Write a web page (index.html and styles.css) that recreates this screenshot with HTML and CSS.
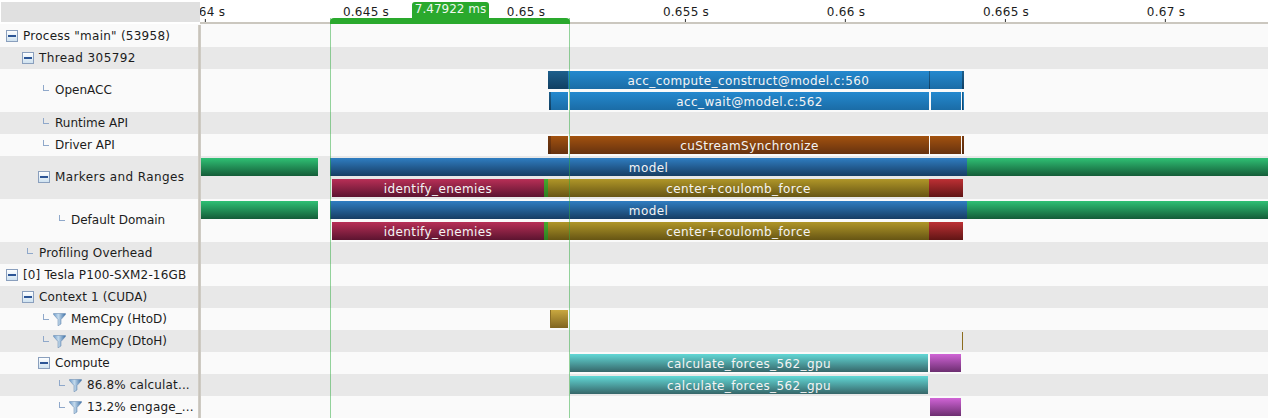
FILE: index.html
```html
<!DOCTYPE html>
<html lang="en">
<head>
<meta charset="utf-8">
<title>Timeline</title>
<link rel="stylesheet" href="styles.css">
</head>
<body>
<svg class="defs" width="0" height="0" aria-hidden="true">
  <defs>
    <linearGradient id="funnel-fill" x1="0" x2="1" y1="0" y2="0">
      <stop offset="0" stop-color="#6b9aca"/>
      <stop offset="0.4" stop-color="#c4daec"/>
      <stop offset="1" stop-color="#3f72a8"/>
    </linearGradient>
    <symbol id="funnel" viewBox="0 0 13 13">
      <path d="M0.5 0.5H12.5V1.5L8 6.5V11L5 12.8V6.5L0.5 1.5Z" fill="url(#funnel-fill)" stroke="#6f91b5" stroke-width="0.6"/>
    </symbol>
  </defs>
</svg>
<div class="app">
  <header class="ruler-row">
    <div class="corner"></div>
    <div class="ruler">
      <span class="tick" style="left:5px">0.64 s</span>
      <span class="tick" style="left:165px">0.645 s</span>
      <span class="tick" style="left:325px">0.65 s</span>
      <span class="tick" style="left:485px">0.655 s</span>
      <span class="tick" style="left:645px">0.66 s</span>
      <span class="tick" style="left:805px">0.665 s</span>
      <span class="tick" style="left:965px">0.67 s</span>
    </div>
  </header>

  <div class="row first">
    <div class="label indent-0 spread-m"><span class="toggle"></span>Process "main" (53958)</div>
    <div class="splitter"></div><div class="track"></div>
  </div>
  <div class="row alt">
    <div class="label indent-1 spread-l"><span class="toggle"></span>Thread 305792</div>
    <div class="splitter"></div><div class="track"></div>
  </div>
  <div class="row tall">
    <div class="label indent-2"><span class="elbow"></span>OpenACC</div>
    <div class="splitter"></div>
    <div class="track">
      <div class="lane">
        <div class="bar" style="left:347px;width:416px">
          <div class="seg acc-dark" style="width:20px"></div>
          <div class="seg acc" style="width:361px">acc_compute_construct@model.c:560</div>
          <div class="seg acc-dark" style="width:1px"></div>
          <div class="seg acc" style="width:32px"></div>
          <div class="seg acc-dark" style="width:2px"></div>
        </div>
      </div>
      <div class="lane">
        <div class="bar" style="left:348px;width:415px">
          <div class="seg acc-dark" style="width:2px"></div>
          <div class="seg acc" style="width:17px"></div>
          <div class="seg gap" style="width:2px"></div>
          <div class="seg acc" style="width:359px">acc_wait@model.c:562</div>
          <div class="seg gap" style="width:2px"></div>
          <div class="seg acc" style="width:30px"></div>
          <div class="seg gap" style="width:1px"></div>
          <div class="seg acc-dark" style="width:1px"></div>
          <div class="seg acc" style="width:1px"></div>
        </div>
      </div>
    </div>
  </div>
  <div class="row alt">
    <div class="label indent-2"><span class="elbow"></span>Runtime API</div>
    <div class="splitter"></div><div class="track"></div>
  </div>
  <div class="row">
    <div class="label indent-2"><span class="elbow"></span>Driver API</div>
    <div class="splitter"></div>
    <div class="track">
      <div class="lane">
        <div class="bar" style="left:347px;width:416px">
          <div class="seg driver-dark" style="width:3px"></div>
          <div class="seg driver" style="width:17px"></div>
          <div class="seg gap" style="width:2px"></div>
          <div class="seg driver" style="width:359px">cuStreamSynchronize</div>
          <div class="seg gap" style="width:1px"></div>
          <div class="seg driver" style="width:31px"></div>
          <div class="seg gap" style="width:1px"></div>
          <div class="seg driver-dark" style="width:2px"></div>
        </div>
      </div>
    </div>
  </div>
  <div class="row alt tall">
    <div class="label indent-2 spread-l"><span class="toggle"></span>Markers and Ranges</div>
    <div class="splitter"></div>
    <div class="track">
      <div class="lane">
        <div class="bar range-green" style="left:0;width:117px"></div>
        <div class="bar range-blue" style="left:129px;width:637px">model</div>
        <div class="bar range-green" style="left:766px;width:301px"></div>
      </div>
      <div class="lane">
        <div class="bar" style="left:131px;width:631px">
          <div class="seg crimson" style="width:212px">identify_enemies</div>
          <div class="seg leaf" style="width:4px"></div>
          <div class="seg gold" style="width:381px">center+coulomb_force</div>
          <div class="seg red" style="width:34px"></div>
        </div>
      </div>
    </div>
  </div>
  <div class="row tall">
    <div class="label indent-3"><span class="elbow"></span>Default Domain</div>
    <div class="splitter"></div>
    <div class="track">
      <div class="lane">
        <div class="bar range-green" style="left:0;width:117px"></div>
        <div class="bar range-blue" style="left:129px;width:637px">model</div>
        <div class="bar range-green" style="left:766px;width:301px"></div>
      </div>
      <div class="lane">
        <div class="bar" style="left:131px;width:631px">
          <div class="seg crimson" style="width:212px">identify_enemies</div>
          <div class="seg leaf" style="width:4px"></div>
          <div class="seg gold" style="width:381px">center+coulomb_force</div>
          <div class="seg red" style="width:34px"></div>
        </div>
      </div>
    </div>
  </div>
  <div class="row alt">
    <div class="label indent-1 spread-s"><span class="elbow"></span>Profiling Overhead</div>
    <div class="splitter"></div><div class="track"></div>
  </div>
  <div class="row">
    <div class="label indent-0 spread-s"><span class="toggle"></span>[0] Tesla P100-SXM2-16GB</div>
    <div class="splitter"></div><div class="track"></div>
  </div>
  <div class="row alt">
    <div class="label indent-1 spread-s"><span class="toggle"></span>Context 1 (CUDA)</div>
    <div class="splitter"></div><div class="track"></div>
  </div>
  <div class="row">
    <div class="label indent-2"><span class="elbow with-funnel"></span><svg class="funnel"><use href="#funnel"/></svg>MemCpy (HtoD)</div>
    <div class="splitter"></div>
    <div class="track">
      <div class="lane">
        <div class="bar memcpy" style="left:349px;width:18px"></div>
      </div>
    </div>
  </div>
  <div class="row alt">
    <div class="label indent-2"><span class="elbow with-funnel"></span><svg class="funnel"><use href="#funnel"/></svg>MemCpy (DtoH)</div>
    <div class="splitter"></div>
    <div class="track">
      <div class="lane">
        <div class="bar sliver" style="left:761px;width:1px"></div>
      </div>
    </div>
  </div>
  <div class="row">
    <div class="label indent-2"><span class="toggle"></span>Compute</div>
    <div class="splitter"></div>
    <div class="track">
      <div class="lane">
        <div class="bar teal" style="left:369px;width:358px">calculate_forces_562_gpu</div>
        <div class="bar purple" style="left:729px;width:31px"></div>
      </div>
    </div>
  </div>
  <div class="row alt">
    <div class="label indent-3 spread-s"><span class="elbow with-funnel"></span><svg class="funnel"><use href="#funnel"/></svg>86.8% calculat...</div>
    <div class="splitter"></div>
    <div class="track">
      <div class="lane">
        <div class="bar teal" style="left:369px;width:358px">calculate_forces_562_gpu</div>
      </div>
    </div>
  </div>
  <div class="row">
    <div class="label indent-3 spread-s"><span class="elbow with-funnel"></span><svg class="funnel"><use href="#funnel"/></svg>13.2% engage_...</div>
    <div class="splitter"></div>
    <div class="track">
      <div class="lane">
        <div class="bar purple" style="left:729px;width:31px"></div>
      </div>
    </div>
  </div>

  <div class="selection" style="left:330px;width:240px">
    <div class="selection-cap"></div>
    <div class="selection-label">7.47922 ms</div>
  </div>
</div>
</body>
</html>
```

FILE: styles.css
```css
* { box-sizing: border-box; }

html, body {
  margin: 0;
  padding: 0;
  background: #fff;
}

.defs { position: absolute; }

.app {
  position: relative;
  width: 1268px;
  height: 418px;
  overflow: hidden;
  font: 12px/16px "DejaVu Sans", sans-serif;
  color: #1c1c1c;
}

/* ruler */
.ruler-row {
  display: flex;
  height: 24px;
}

.corner {
  width: 199px;
  height: 20px;
  margin: 2px 0 2px 1px;
  background: #e0e0e0;
}

.ruler {
  position: relative;
  flex: 1;
  overflow: hidden;
  border-bottom: 2px solid #cbc7bf;
}

.tick {
  position: absolute;
  top: 4px;
  margin-left: 1px;
  transform: translateX(-50%);
  white-space: nowrap;
  letter-spacing: 0.25px;
}

.tick::after {
  content: "";
  position: absolute;
  left: calc(50% - 1px);
  top: 15px;
  width: 1px;
  height: 3px;
  background: #333;
}

/* rows */
.row {
  display: flex;
  height: 22px;
  background: #fafafa;
}

.row.tall { height: 43px; }
.row.tall .label { padding-bottom: 2px; }
.row.first { height: 23px; padding-top: 1px; }
.row.alt { background: #e8e8e8; }

.label {
  display: flex;
  align-items: center;
  width: 198px;
  flex: none;
  white-space: nowrap;
  overflow: hidden;
}

.spread-s { letter-spacing: 0.15px; }
.spread-m { letter-spacing: 0.25px; }
.spread-l { letter-spacing: 0.4px; }

.indent-0 { padding-left: 6px; }
.indent-1 { padding-left: 22px; }
.indent-2 { padding-left: 38px; }
.indent-3 { padding-left: 54px; }

.toggle {
  position: relative;
  flex: none;
  width: 12px;
  height: 12px;
  margin-right: 5px;
  border: 1px solid #8a9fbd;
  background: linear-gradient(#fdfeff, #cfe2f0);
}

.toggle::after {
  content: "";
  position: absolute;
  left: 1px;
  right: 1px;
  top: 4px;
  height: 2px;
  background: #2c5596;
}

.elbow {
  flex: none;
  width: 6px;
  height: 6px;
  margin: 0 6px 4px 5px;
  border-left: 1px solid #8fa8ca;
  border-bottom: 1px solid #8fa8ca;
}

.elbow.with-funnel { margin-right: 4px; }

.funnel {
  flex: none;
  width: 13px;
  height: 13px;
  margin-right: 5px;
}

.splitter {
  flex: none;
  width: 3px;
  background: linear-gradient(90deg, #d6d2ca, #c4c0b8 60%, #d6d3cc);
}

.track {
  flex: 1;
  min-width: 0;
  display: flex;
  flex-direction: column;
  gap: 3px;
  padding: 2px 0;
}

.lane {
  position: relative;
  height: 18px;
}

/* bars */
.bar {
  position: absolute;
  top: 0;
  height: 18px;
  display: flex;
  justify-content: center;
  color: #f4f4f4;
  line-height: 20px;
  letter-spacing: 0.4px;
  white-space: nowrap;
}

.seg {
  flex: none;
  height: 18px;
  text-align: center;
  overflow: hidden;
}

.bar:has(> .seg) { justify-content: flex-start; }

.gap { background: #fafafa; }
.acc { background: linear-gradient(#2489cf, #1b6ca6); }
.acc-dark { background: linear-gradient(#1d5f8c, #103f62); }
.driver { background: linear-gradient(#a3520f, #66320f); }
.driver-dark { background: linear-gradient(#7a3c10, #55290d); }
.range-blue { background: linear-gradient(#2f7dc1, #173d63); }
.range-green { background: linear-gradient(#2fc074, #145c38); }
.crimson { background: linear-gradient(#b82f56, #5c1430); }
.leaf { background: linear-gradient(#46ab2e, #2f7c20); }
.gold { background: linear-gradient(#b09628, #665514); }
.red { background: linear-gradient(#bd3034, #601515); }
.memcpy { background: linear-gradient(#c9a840, #7f641f); border-left: 1px solid #8a6d25; }
.sliver { background: #8c6c1e; }
.teal { background: linear-gradient(#62d8d6, #366669); }
.purple { background: linear-gradient(#d064d6, #6c2e70); }

/* selection overlay */
.selection {
  position: absolute;
  top: 18px;
  bottom: 0;
  border-left: 1px solid rgba(44, 170, 60, 0.5);
  border-right: 1px solid rgba(44, 170, 60, 0.5);
}

.selection-cap {
  position: absolute;
  left: -1px;
  right: -1px;
  top: 0;
  height: 6px;
  background: #2aa92d;
  border-radius: 4px 4px 0 0;
}

.selection-label {
  position: absolute;
  left: 81px;
  top: -16px;
  width: 77px;
  height: 17px;
  background: #2aa92d;
  border-radius: 3px 3px 0 0;
  color: #eef8ee;
  line-height: 15px;
  text-align: center;
  white-space: nowrap;
}
```
